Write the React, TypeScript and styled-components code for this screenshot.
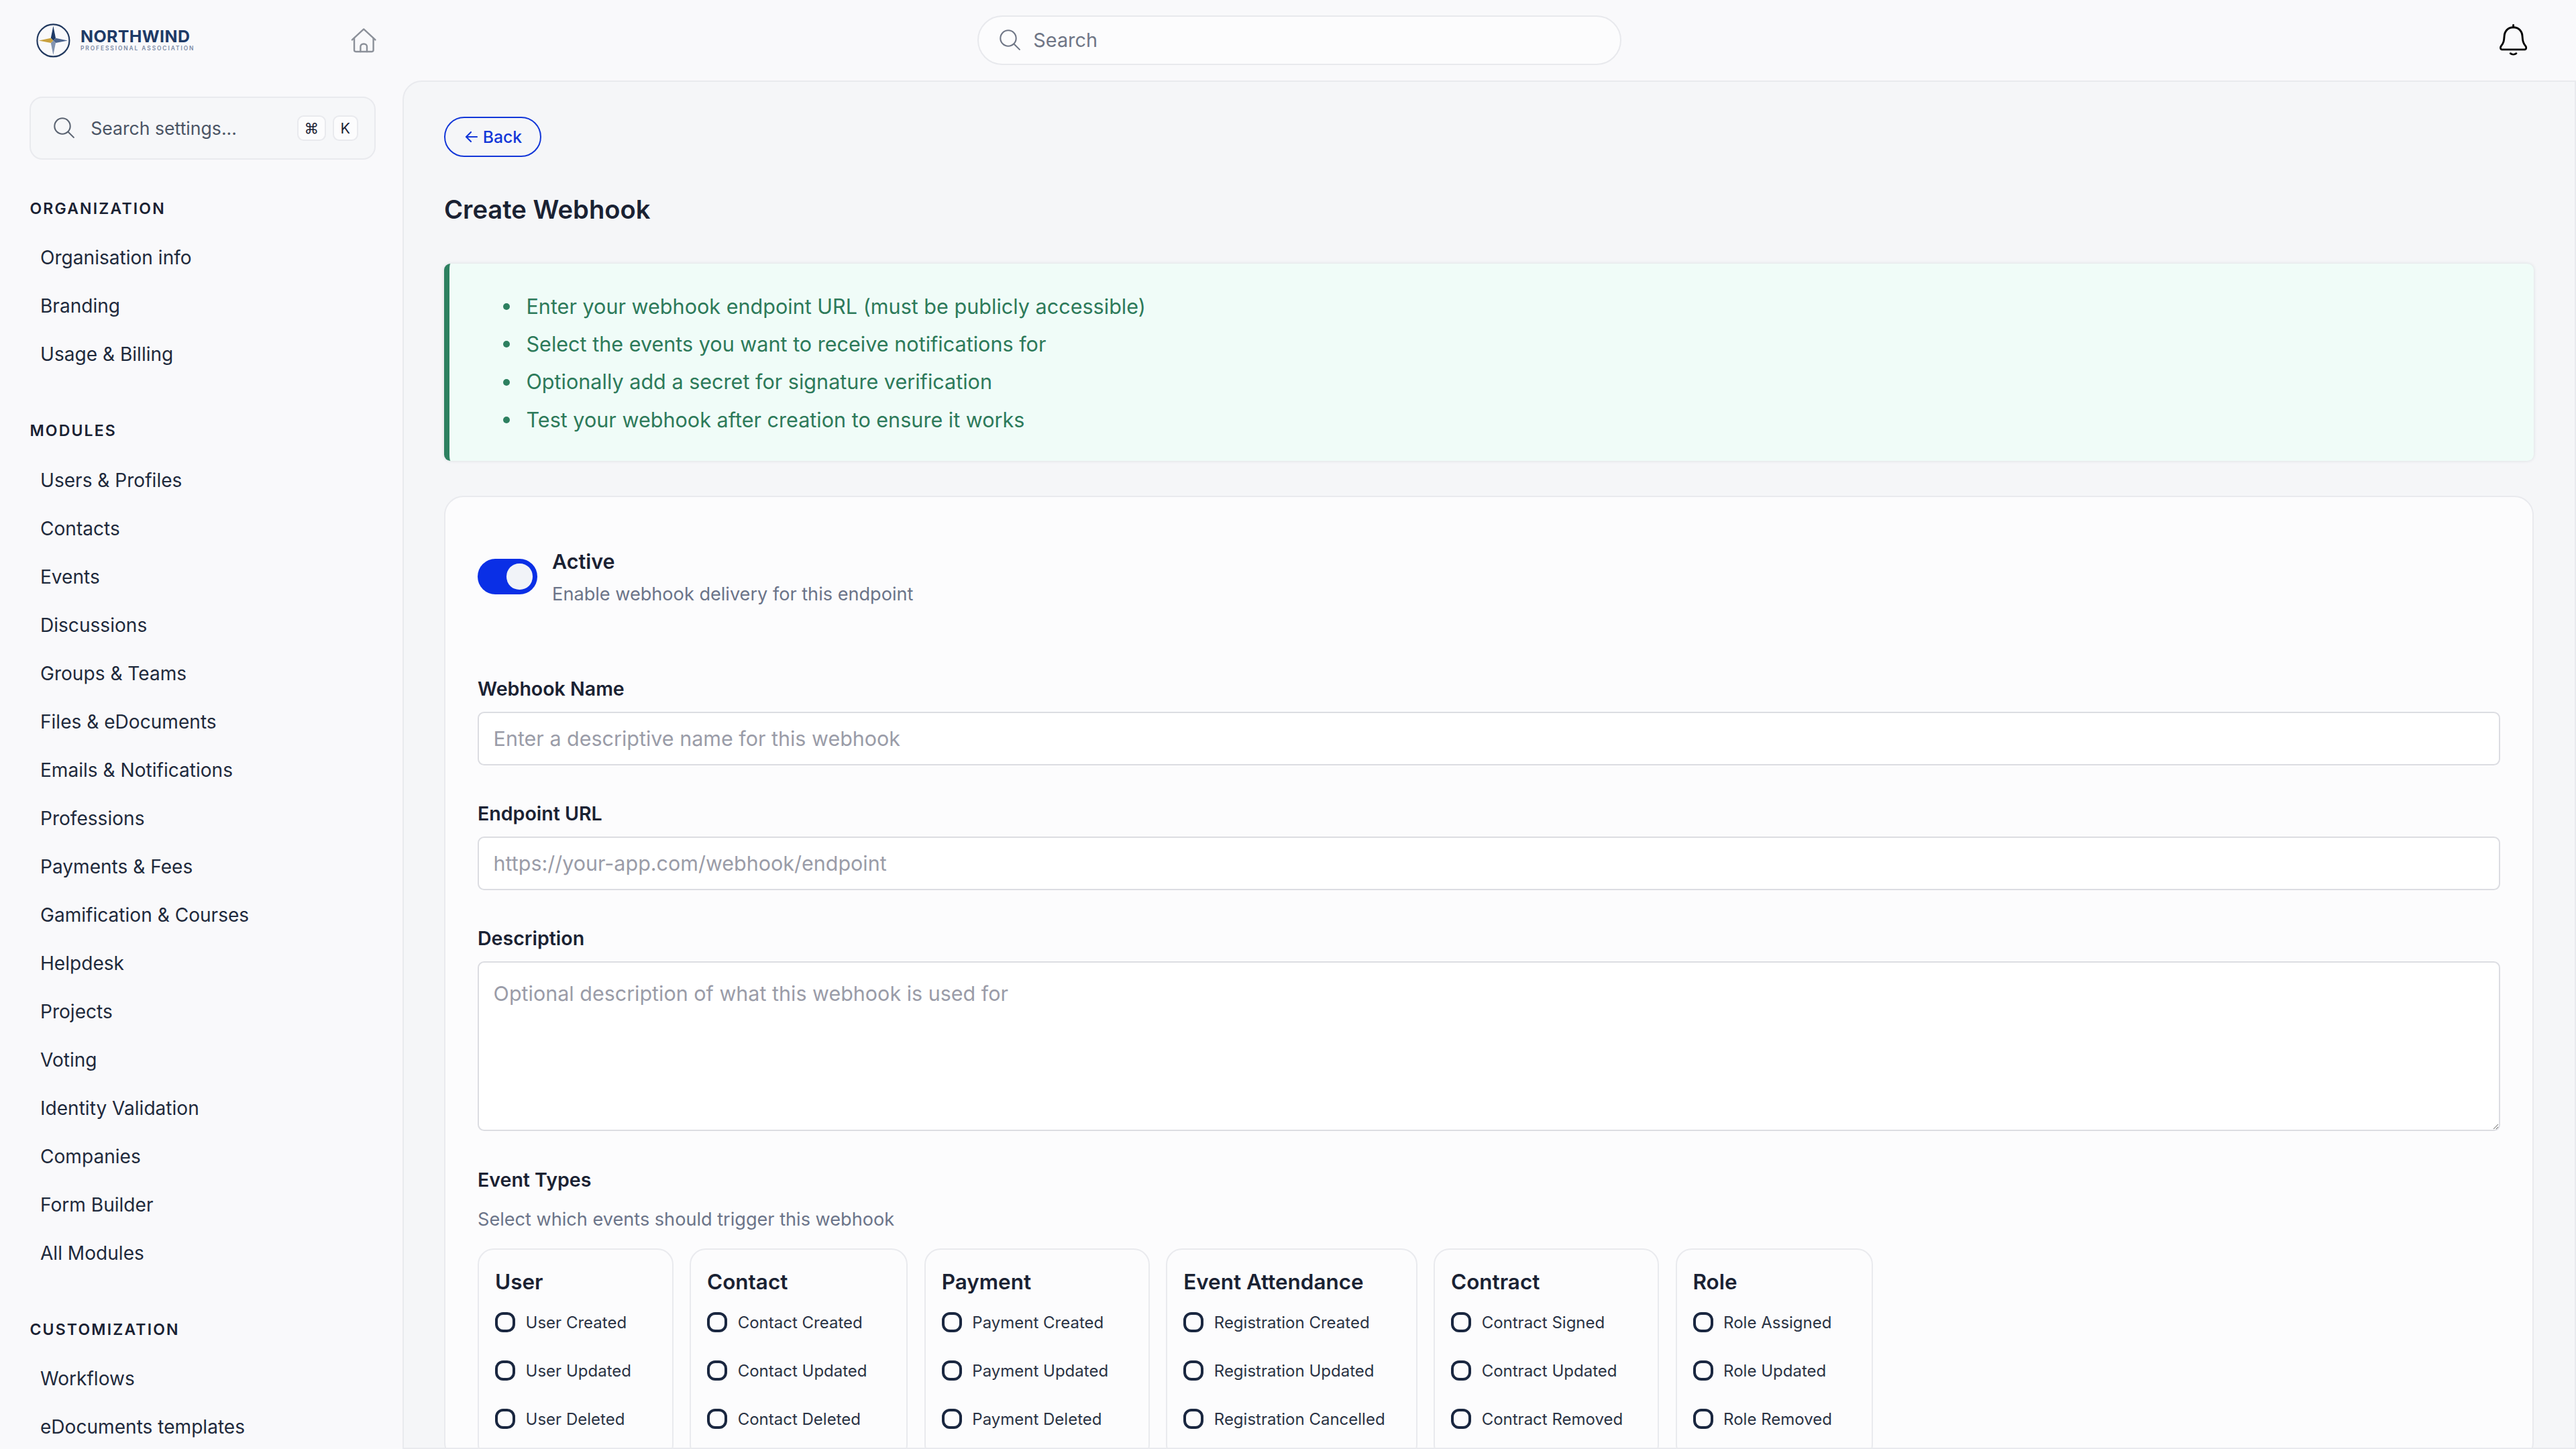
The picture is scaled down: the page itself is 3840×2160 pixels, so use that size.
import React from 'react';
import styled, { createGlobalStyle } from 'styled-components';

const GlobalStyle = createGlobalStyle`
  html, body {
    margin: 0;
    padding: 0;
    background: #f9f9fb;
    overflow: hidden;
  }
  #root {
    zoom: 2.4;
    width: 1600px;
    height: 900px;
    overflow: hidden;
  }
  * {
    box-sizing: border-box;
  }
`;

const Shell = styled.div`
  display: flex;
  flex-direction: column;
  height: 900px;
  font-family: Inter, 'Noto Sans', sans-serif;
  color: #1a2233;
`;

const TopBar = styled.header`
  flex: 0 0 50px;
  display: grid;
  grid-template-columns: 250px 1fr 250px;
  align-items: center;
`;

const BrandCell = styled.div`
  display: flex;
  align-items: center;
  justify-content: space-between;
  padding: 0 16px 0 22px;
`;

const Brand = styled.div`
  display: flex;
  align-items: center;
  gap: 6px;
`;

const BrandText = styled.div`
  display: flex;
  flex-direction: column;
  color: #1e3a66;
`;

const BrandName = styled.span`
  font-size: 10.4px;
  line-height: 10px;
  font-weight: 700;
  letter-spacing: 0.16px;
`;

const BrandSub = styled.span`
  font-size: 3.5px;
  line-height: 5px;
  font-weight: 600;
  letter-spacing: 0.8px;
  color: #7b8aa5;
`;

const GlobalSearch = styled.div`
  justify-self: center;
  margin-left: 14px;
  width: 400px;
  height: 31px;
  display: flex;
  align-items: center;
  gap: 8px;
  padding: 0 13px;
  background: #fcfcfd;
  border: 1px solid #e8e9ed;
  border-radius: 16px;
  font-size: 12px;
  color: #6f7686;
`;

const BellCell = styled.div`
  display: flex;
  justify-content: flex-end;
  padding-right: 30px;
`;

const Body = styled.div`
  flex: 1;
  min-height: 0;
  display: flex;
`;

const Sidebar = styled.aside`
  flex: 0 0 250px;
  padding: 10px 16.7px 0 18.5px;
  overflow: hidden;
`;

const SettingsSearch = styled.div`
  height: 39px;
  display: flex;
  align-items: center;
  padding: 0 10px 0 14px;
  gap: 10px;
  background: #f6f7f9;
  border: 1px solid #e9eaee;
  border-radius: 8px;
  font-size: 11.1px;
  color: #4b5565;
`;

const SearchLabel = styled.span`
  flex: 1;
`;

const Keys = styled.div`
  display: flex;
  gap: 4px;
`;

const Key = styled.kbd<{ $wide?: boolean }>`
  width: ${(p) => (p.$wide ? 18 : 16)}px;
  height: 16px;
  display: flex;
  align-items: center;
  justify-content: center;
  background: #fcfcfd;
  border: 1px solid #e9eaee;
  border-radius: 4px;
  font-family: Inter, 'DejaVu Sans', sans-serif;
  font-size: 9px;
  color: #1a2233;
`;

const NavSection = styled.section`
  margin-top: 23px;
  & + & {
    margin-top: 25.2px;
  }
`;

const NavHeading = styled.h3`
  margin: 0 0 8px;
  font-size: 9.6px;
  line-height: 15px;
  font-weight: 600;
  letter-spacing: 0.9px;
  color: #1a2233;
`;

const NavItem = styled.div`
  height: 30px;
  display: flex;
  align-items: center;
  padding-left: 6.5px;
  font-size: 11.7px;
  color: #1f2a3c;
`;

const Panel = styled.main`
  flex: 1;
  min-width: 0;
  overflow: hidden;
  padding: 21.7px 25.5px 0 25px;
  background: #f5f6f8;
  border: 1px solid #e9eaee;
  border-radius: 12px 0 0 0;
`;

const BackButton = styled.button`
  height: 25px;
  width: 60.5px;
  display: flex;
  align-items: center;
  justify-content: center;
  gap: 2px;
  padding: 0;
  background: transparent;
  border: 1px solid #1337d8;
  border-radius: 13px;
  color: #1337d8;
  font-family: inherit;
  font-size: 10.3px;
  font-weight: 500;
`;

const PageTitle = styled.h1`
  margin: 20.8px 0 21.5px;
  font-size: 15.9px;
  line-height: 24px;
  font-weight: 600;
  color: #1a2233;
`;

const InfoBox = styled.ul`
  margin: 0 0 21.4px;
  padding: 15px 0 14px 33.5px;
  list-style: none;
  background: #f0fcf8;
  border-left: 3.5px solid #2d8060;
  border-radius: 4px;
  box-shadow: 0 0 2px rgba(20, 40, 60, 0.12);
`;

const InfoItem = styled.li`
  display: flex;
  align-items: center;
  gap: 10px;
  font-size: 12.74px;
  line-height: 23.4px;
  color: #2d7a5a;
  &::before {
    content: '';
    width: 4.2px;
    height: 4.2px;
    border-radius: 50%;
    background: #2d8060;
  }
`;

const FormCard = styled.form`
  padding: 30px 20px 0;
  background: #fcfcfd;
  border: 1px solid #e9eaee;
  border-radius: 12px;
`;

const ToggleRow = styled.div`
  display: flex;
  gap: 9.3px;
  margin-bottom: 40.5px;
`;

const Toggle = styled.div`
  width: 37px;
  height: 22px;
  margin-top: 8.5px;
  display: flex;
  align-items: center;
  justify-content: flex-end;
  padding-right: 3px;
  background: #0a2fe6;
  border-radius: 11px;
`;

const Knob = styled.span`
  width: 16px;
  height: 16px;
  border-radius: 50%;
  background: #f1f3f8;
`;

const ToggleText = styled.div`
  display: flex;
  flex-direction: column;
`;

const ToggleTitle = styled.span`
  font-size: 12.7px;
  line-height: 20px;
  font-weight: 600;
  color: #1a2233;
`;

const Hint = styled.span`
  font-size: 11.3px;
  line-height: 21px;
  color: #6b7489;
`;

const Field = styled.div`
  margin-bottom: 22.3px;
`;

const FieldLabel = styled.label`
  display: block;
  margin-bottom: 6px;
  font-size: 11.9px;
  line-height: 16px;
  font-weight: 600;
  color: #1a2233;
`;

const TextInput = styled.input`
  display: block;
  width: 100%;
  height: 33.2px;
  padding: 0 9px;
  background: #fff;
  border: 1px solid #dcdde2;
  border-radius: 4px;
  font-family: inherit;
  font-size: 12.7px;
  outline: none;
  &::placeholder {
    color: #9a9ca8;
    opacity: 1;
  }
`;

const TextArea = styled.textarea`
  display: block;
  width: 100%;
  height: 105.5px;
  padding: 10px 9px;
  background: #fff;
  border: 1px solid #dcdde2;
  border-radius: 4px;
  font-family: inherit;
  font-size: 12.7px;
  line-height: 18px;
  outline: none;
  resize: vertical;
  &::placeholder {
    color: #9a9ca8;
    opacity: 1;
  }
`;

const EventHint = styled(Hint)`
  display: block;
  margin-top: 0;
  margin-bottom: 7.5px;
`;

const GroupRow = styled.div`
  display: flex;
  gap: 10.2px;
  align-items: flex-start;
`;

const Group = styled.div<{ $width: number }>`
  width: ${(p) => p.$width}px;
  flex: none;
  padding: 10px 10px 10px;
  background: #fcfcfd;
  border: 1px solid #e9eaee;
  border-radius: 10px;
`;

const GroupTitle = styled.h4`
  margin: 0;
  font-size: 13.1px;
  line-height: 20px;
  font-weight: 600;
  color: #1a2233;
`;

const CheckRow = styled.label`
  height: 30px;
  display: flex;
  align-items: center;
  gap: 6.5px;
  font-size: 10px;
  color: #2a3344;
`;

const CheckBox = styled.span`
  flex: none;
  width: 12.5px;
  height: 12.5px;
  border: 1.7px solid #1a2740;
  border-radius: 5px;
`;

const NAV = [
  { title: 'ORGANIZATION', items: ['Organisation info', 'Branding', 'Usage & Billing'] },
  {
    title: 'MODULES',
    items: [
      'Users & Profiles',
      'Contacts',
      'Events',
      'Discussions',
      'Groups & Teams',
      'Files & eDocuments',
      'Emails & Notifications',
      'Professions',
      'Payments & Fees',
      'Gamification & Courses',
      'Helpdesk',
      'Projects',
      'Voting',
      'Identity Validation',
      'Companies',
      'Form Builder',
      'All Modules',
    ],
  },
  { title: 'CUSTOMIZATION', items: ['Workflows', 'eDocuments templates'] },
];

const INFO = [
  'Enter your webhook endpoint URL (must be publicly accessible)',
  'Select the events you want to receive notifications for',
  'Optionally add a secret for signature verification',
  'Test your webhook after creation to ensure it works',
];

const GROUPS = [
  { title: 'User', width: 121.5, events: ['User Created', 'User Updated', 'User Deleted'] },
  { title: 'Contact', width: 135.5, events: ['Contact Created', 'Contact Updated', 'Contact Deleted'] },
  { title: 'Payment', width: 140, events: ['Payment Created', 'Payment Updated', 'Payment Deleted'] },
  {
    title: 'Event Attendance',
    width: 156,
    events: ['Registration Created', 'Registration Updated', 'Registration Cancelled'],
  },
  { title: 'Contract', width: 140, events: ['Contract Signed', 'Contract Updated', 'Contract Removed'] },
  { title: 'Role', width: 122.5, events: ['Role Assigned', 'Role Updated', 'Role Removed'] },
];

const SearchIcon = ({ color }: { color: string }) => (
  <svg width="13" height="13" viewBox="0 0 24 24" fill="none" stroke={color} strokeWidth="1.6" strokeLinecap="round">
    <circle cx="10" cy="10" r="9" />
    <path d="M16.5 16.5 23 23" />
  </svg>
);

const Logo = () => (
  <svg width="22" height="22" viewBox="0 0 44 44">
    <circle cx="22" cy="22" r="20" fill="none" stroke="#22395f" strokeWidth="1.8" />
    <path d="M22 4 25 19 22 22 19 19Z" fill="#1e3a66" />
    <path d="M40 22 25 19 22 22 25 25Z" fill="#4d658e" />
    <path d="M22 40 25 25 22 22 19 25Z" fill="#8394b0" />
    <path d="M4 22 19 19 22 22 19 25Z" fill="#c9a13f" />
  </svg>
);

const HomeIcon = () => (
  <svg width="16" height="16" viewBox="0 0 16 16" fill="none" stroke="#8b9099" strokeWidth="1" strokeLinejoin="round" strokeLinecap="round">
    <path d="M0.8 7.7 8 1 15.2 7.7" />
    <path d="M2.1 6.6V14a1 1 0 0 0 1 1h9.9a1 1 0 0 0 1-1V6.6" />
    <path d="M6 15V11.9a1.7 1.7 0 0 1 1.7-1.7h0.6a1.7 1.7 0 0 1 1.7 1.7V15" />
  </svg>
);

const BellIcon = () => (
  <svg width="18" height="20" viewBox="0 0 18 20" fill="none" stroke="#000" strokeWidth="1.2" strokeLinecap="round" strokeLinejoin="round">
    <path d="M9 0.6V2" />
    <path d="M9 2C5.8 2 3.6 4.2 3.4 7.4 3.2 10.4 3 11.6 1.4 13.6 0.6 14.6 1 15.8 2.4 15.8H15.6C17 15.8 17.4 14.6 16.6 13.6 15 11.6 14.8 10.4 14.6 7.4 14.4 4.2 12.2 2 9 2Z" />
    <path d="M7.2 18.2C8.2 19 9.8 19 10.8 18.2" />
  </svg>
);

const BackArrow = () => (
  <svg width="10" height="10" viewBox="0 0 24 24" fill="none" stroke="currentColor" strokeWidth="2.2" strokeLinecap="round" strokeLinejoin="round">
    <path d="M20 12H4" />
    <path d="M11 5 4 12 11 19" />
  </svg>
);

const App = () => (
  <Shell>
    <GlobalStyle />
    <TopBar>
      <BrandCell>
        <Brand>
          <Logo />
          <BrandText>
            <BrandName>NORTHWIND</BrandName>
            <BrandSub>PROFESSIONAL ASSOCIATION</BrandSub>
          </BrandText>
        </Brand>
        <HomeIcon />
      </BrandCell>
      <GlobalSearch>
        <SearchIcon color="#6f7686" />
        Search
      </GlobalSearch>
      <BellCell>
        <BellIcon />
      </BellCell>
    </TopBar>
    <Body>
      <Sidebar>
        <SettingsSearch>
          <SearchIcon color="#5b6472" />
          <SearchLabel>Search settings...</SearchLabel>
          <Keys>
            <Key $wide>⌘</Key>
            <Key>K</Key>
          </Keys>
        </SettingsSearch>
        {NAV.map((section) => (
          <NavSection key={section.title}>
            <NavHeading>{section.title}</NavHeading>
            {section.items.map((item) => (
              <NavItem key={item}>{item}</NavItem>
            ))}
          </NavSection>
        ))}
      </Sidebar>
      <Panel>
        <BackButton type="button">
          <BackArrow />
          Back
        </BackButton>
        <PageTitle>Create Webhook</PageTitle>
        <InfoBox>
          {INFO.map((line) => (
            <InfoItem key={line}>{line}</InfoItem>
          ))}
        </InfoBox>
        <FormCard>
          <ToggleRow>
            <Toggle>
              <Knob />
            </Toggle>
            <ToggleText>
              <ToggleTitle>Active</ToggleTitle>
              <Hint>Enable webhook delivery for this endpoint</Hint>
            </ToggleText>
          </ToggleRow>
          <Field>
            <FieldLabel>Webhook Name</FieldLabel>
            <TextInput placeholder="Enter a descriptive name for this webhook" />
          </Field>
          <Field>
            <FieldLabel>Endpoint URL</FieldLabel>
            <TextInput placeholder="https://your-app.com/webhook/endpoint" />
          </Field>
          <Field>
            <FieldLabel>Description</FieldLabel>
            <TextArea placeholder="Optional description of what this webhook is used for" />
          </Field>
          <FieldLabel>Event Types</FieldLabel>
          <EventHint>Select which events should trigger this webhook</EventHint>
          <GroupRow>
            {GROUPS.map((group) => (
              <Group key={group.title} $width={group.width}>
                <GroupTitle>{group.title}</GroupTitle>
                {group.events.map((event) => (
                  <CheckRow key={event}>
                    <CheckBox />
                    {event}
                  </CheckRow>
                ))}
              </Group>
            ))}
          </GroupRow>
        </FormCard>
      </Panel>
    </Body>
  </Shell>
);

export default App;
